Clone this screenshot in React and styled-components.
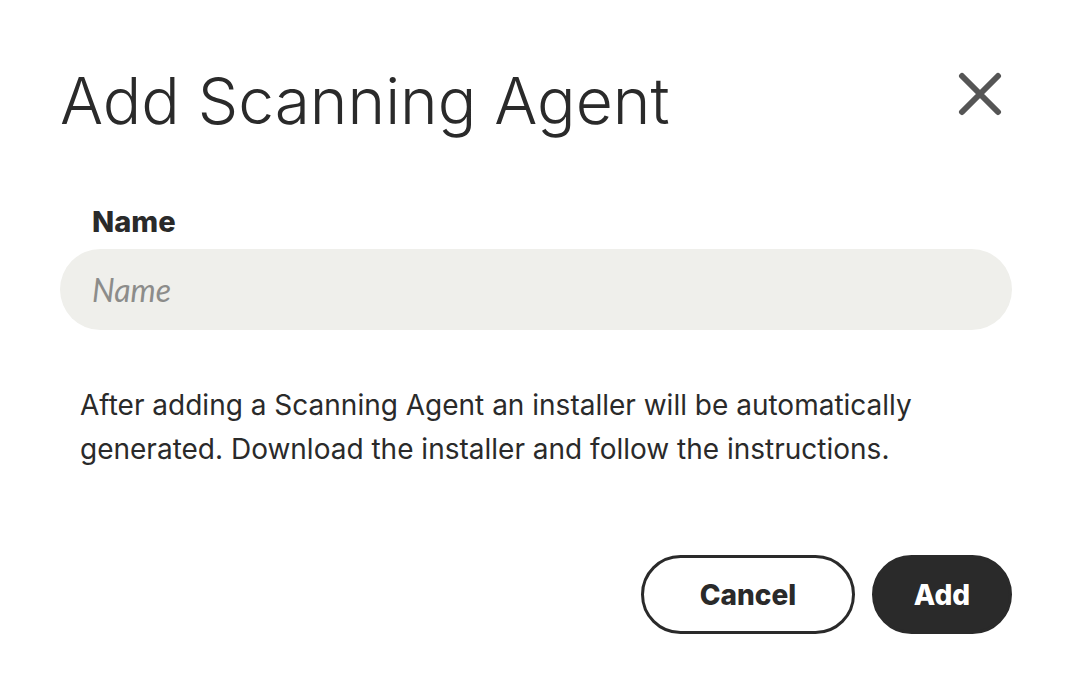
import React from 'react'
import styled, { createGlobalStyle } from 'styled-components'

const GlobalStyle = createGlobalStyle`
  body {
    margin: 0;
    background: #fff;
    font-family: Inter, "Liberation Sans", sans-serif;
    color: #2a2a2a;
  }
`

const Dialog = styled.div`
  width: 1072px;
  height: 697px;
  box-sizing: border-box;
  padding: 56px 60px 0 60px;
  display: flex;
  flex-direction: column;
`

const Header = styled.div`
  display: flex;
  justify-content: space-between;
  align-items: flex-start;
`

const Title = styled.h1`
  margin: 0;
  font-size: 64px;
  font-weight: 300;
  line-height: 90px;
  color: #2a2a2a;
`

const CloseButton = styled.button`
  border: none;
  background: none;
  padding: 0;
  margin: 16px 10px 0 0;
  width: 44px;
  height: 44px;
  cursor: pointer;
  display: flex;
  align-items: center;
  justify-content: center;
`

const Field = styled.div`
  margin-top: 59px;
  display: flex;
  flex-direction: column;
`

const Label = styled.label`
  padding-left: 32px;
  font-size: 29px;
  font-weight: 800;
  line-height: 34px;
  margin-bottom: 10px;
`

const Input = styled.input`
  height: 81px;
  box-sizing: border-box;
  border: none;
  border-radius: 41px;
  background: #efefeb;
  padding: 0 32px;
  font-family: Lato, "Liberation Sans", sans-serif;
  font-size: 32px;
  color: #2a2a2a;
  outline: none;
  &::placeholder {
    color: #8c8c8a;
    font-style: italic;
  }
`

const Note = styled.p`
  margin: 53px 0 0 20px;
  font-size: 28px;
  line-height: 44px;
  color: #2a2a2a;
`

const Actions = styled.div`
  margin-top: 84px;
  display: flex;
  justify-content: flex-end;
  gap: 17px;
`

const Button = styled.button`
  height: 79px;
  width: ${p => p.$width}px;
  box-sizing: border-box;
  border-radius: 40px;
  border: 3px solid #2a2a2a;
  background: ${p => (p.$primary ? '#2a2a2a' : '#fff')};
  color: ${p => (p.$primary ? '#fff' : '#2a2a2a')};
  font-family: Inter, "Liberation Sans", sans-serif;
  font-size: 28px;
  font-weight: 800;
  cursor: pointer;
`

export default function App() {
  return (
    <>
      <GlobalStyle />
      <Dialog>
        <Header>
          <Title>Add Scanning Agent</Title>
          <CloseButton aria-label="Close">
            <svg width="44" height="44" viewBox="0 0 44 44">
              <path
                d="M4 4 L40 40 M40 4 L4 40"
                stroke="#555"
                strokeWidth="6"
                strokeLinecap="round"
              />
            </svg>
          </CloseButton>
        </Header>
        <Field>
          <Label htmlFor="agent-name">Name</Label>
          <Input id="agent-name" placeholder="Name" />
        </Field>
        <Note>
          After adding a Scanning Agent an installer will be automatically
          <br />
          generated. Download the installer and follow the instructions.
        </Note>
        <Actions>
          <Button $width={214}>Cancel</Button>
          <Button $width={140} $primary>Add</Button>
        </Actions>
      </Dialog>
    </>
  )
}
